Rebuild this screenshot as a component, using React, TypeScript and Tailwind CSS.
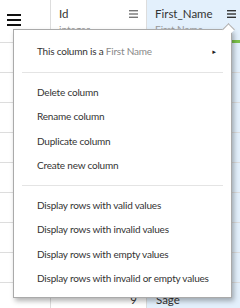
import React from 'react';

const rows = [1, 2, 3, 4, 5, 6, 7, 8, 9];

const actions = ['Delete column', 'Rename column', 'Duplicate column', 'Create new column'];
const filters = [
  'Display rows with valid values',
  'Display rows with invalid values',
  'Display rows with empty values',
  'Display rows with invalid or empty values',
];

const MenuIcon = ({ className }: { className: string }) => (
  <svg width="9" height="8" viewBox="0 0 9 8" className={className}>
    <rect x="0" y="0" width="9" height="1.4" fill="currentColor" />
    <rect x="0" y="3.3" width="9" height="1.4" fill="currentColor" />
    <rect x="0" y="6.6" width="9" height="1.4" fill="currentColor" />
  </svg>
);

export default function App() {
  return (
    <div
      className="relative w-[240px] h-[308px] overflow-hidden bg-white text-[#333]"
      style={{ fontFamily: 'Lato, "Open Sans", sans-serif' }}
    >
      <div className="grid grid-cols-[50px_96px_94px]">
        {/* header */}
        <div className="h-[43px] border-b border-[#ddd] flex items-start pt-[13px] pl-[7px]">
          <svg width="14" height="14" viewBox="0 0 14 14">
            <rect x="0" y="1" width="14" height="2" fill="#111" />
            <rect x="0" y="6" width="14" height="2" fill="#111" />
            <rect x="0" y="11" width="14" height="2" fill="#111" />
          </svg>
        </div>
        <div className="h-[43px] border-l border-[#ddd] relative">
          <div className="flex items-center justify-between pl-[8px] pr-[8px] pt-[6px] text-[11.5px] leading-[16px] whitespace-nowrap">
            <span>Id</span>
            <MenuIcon className="text-[#777]" />
          </div>
          <div className="pl-[8px] text-[10px] leading-[14px] text-[#999]">integer</div>
        </div>
        <div className="h-[43px] border-l border-[#ddd] bg-[#e3f0fc] relative">
          <div className="flex items-center justify-between pl-[8px] pr-[4px] pt-[6px] text-[11.5px] leading-[16px] whitespace-nowrap">
            <span>First_Name</span>
            <MenuIcon className="text-[#333]" />
          </div>
          <div className="pl-[8px] text-[10px] leading-[14px] text-[#999]">First Name</div>
          <div className="absolute left-0 right-0 bottom-0 h-[3px] bg-[#7cc34a]" />
        </div>
        {/* rows 1-8 sit under the menu, only the last one shows */}
        {rows.map((r) => (
          <React.Fragment key={r}>
            <div className="h-[30px] border-b border-[#ddd]" />
            <div className="h-[30px] border-l border-b border-[#ddd] flex items-center justify-end pr-[9px] pt-[4px] text-[11.5px]">
              {r === 9 ? r : ''}
            </div>
            <div className="h-[30px] border-l border-b border-[#ddd] bg-[#e3f0fc] flex items-center pl-[9px] pt-[4px] text-[11.5px]">
              {r === 9 ? 'Sage' : ''}
            </div>
          </React.Fragment>
        ))}
      </div>

      {/* caret */}
      <div className="absolute left-[224px] top-[25px] w-[9px] h-[9px] rotate-45 bg-white border-l border-t border-[#aaa] z-20" />

      {/* popover */}
      <div className="absolute left-[13px] top-[29px] w-[219px] h-[269px] bg-white border border-[#aaa] shadow-[2px_3px_5px_rgba(0,0,0,0.3)] z-10 text-[10px] tracking-[-0.2px] text-[#333] whitespace-nowrap">
        <div className="flex items-center justify-between h-[42px] pl-[23px] pr-[14px]">
          <span>
            This column is a <span className="text-[#8a8a8a]">First Name</span>
          </span>
          <span className="text-[6px] text-[#222]">►</span>
        </div>
        <div className="mx-[8px] border-t border-[#e4e4e4]" />
        <div className="py-[7px]">
          {actions.map((a) => (
            <div key={a} className="h-[24.5px] flex items-center pl-[23px]">
              {a}
            </div>
          ))}
        </div>
        <div className="mx-[8px] border-t border-[#e4e4e4]" />
        <div className="py-[7px]">
          {filters.map((f) => (
            <div key={f} className="h-[24.5px] flex items-center pl-[23px]">
              {f}
            </div>
          ))}
        </div>
      </div>
    </div>
  );
}
